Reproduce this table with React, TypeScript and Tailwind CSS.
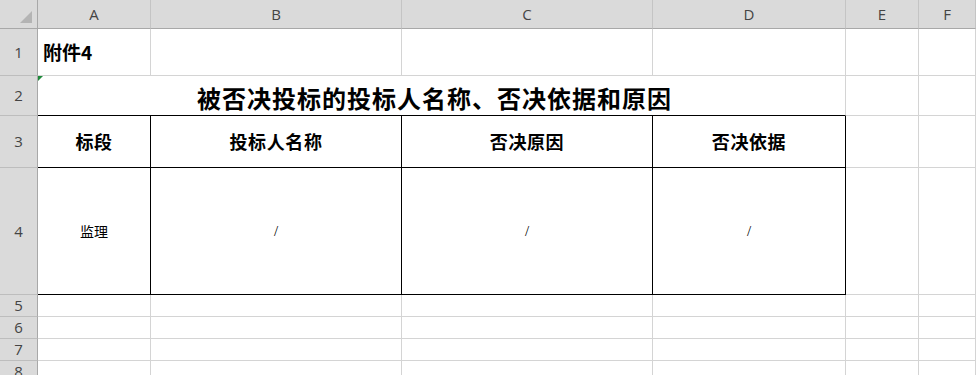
import React from "react";

const COLS = [
  { key: "A", w: "w-[113px]" },
  { key: "B", w: "w-[251px]" },
  { key: "C", w: "w-[251px]" },
  { key: "D", w: "w-[193px]" },
  { key: "E", w: "w-[73px]" },
  { key: "F", w: "flex-1" },
];

const cjk = "font-['Noto_Sans_CJK_SC',sans-serif]";
const ui = "font-['Open_Sans','Noto_Sans',sans-serif]";

function RowHead({ n, h }: { n: number; h: string }) {
  return (
    <div
      className={`${h} w-[38px] shrink-0 flex items-center justify-center bg-[#dadada] border-r border-b border-r-[#a8a8a8] border-b-[#bdbdbd] text-[15px] text-[#444] ${ui}`}
    >
      {n}
    </div>
  );
}

function Cell({
  w,
  className = "",
  children,
}: {
  w: string;
  className?: string;
  children?: React.ReactNode;
}) {
  return (
    <div className={`${w} shrink-0 border-r border-b border-[#d4d4d4] flex items-center justify-center ${className}`}>
      {children}
    </div>
  );
}

function EmptyRow({ n, h }: { n: number; h: string }) {
  return (
    <div className={`flex ${h}`}>
      <RowHead n={n} h={h} />
      {COLS.map((c) => (
        <Cell key={c.key} w={c.w} />
      ))}
    </div>
  );
}

export default function App() {
  const heads = ["标段", "投标人名称", "否决原因", "否决依据"];
  return (
    <div className="w-[976px] h-[375px] overflow-hidden bg-white flex flex-col">
      {/* column header */}
      <div className="flex h-[29px] shrink-0">
        <div className="w-[38px] shrink-0 bg-[#dadada] border-r border-b border-[#a8a8a8] flex items-end justify-end pr-[5px] pb-[5px]">
          <svg width="12" height="12" viewBox="0 0 12 12">
            <polygon points="12,0 12,12 0,12" fill="#b4b4b4" />
          </svg>
        </div>
        {COLS.map((c) => (
          <div
            key={c.key}
            className={`${c.w} shrink-0 bg-[#dadada] border-r border-b border-r-[#c4c4c4] border-b-[#a8a8a8] flex items-center justify-center text-[15px] text-[#444] ${ui}`}
          >
            {c.key}
          </div>
        ))}
      </div>

      {/* row 1 */}
      <div className="flex h-[47px] shrink-0">
        <RowHead n={1} h="h-[47px]" />
        <Cell w={COLS[0].w} className="!justify-start pl-[5px]">
          <span className={`text-[19px] font-bold text-black ${cjk}`}>附件4</span>
        </Cell>
        {COLS.slice(1).map((c) => (
          <Cell key={c.key} w={c.w} />
        ))}
      </div>

      {/* row 2 : merged title */}
      <div className="flex h-[40px] shrink-0">
        <RowHead n={2} h="h-[40px]" />
        <div className="relative w-[808px] shrink-0 border-r border-b border-r-[#d4d4d4] border-b-black flex items-center justify-center pt-[4px] pr-[14px]">
          <span className="absolute left-0 top-0 w-0 h-0 border-t-[5px] border-r-[5px] border-t-[#1e8a3a] border-r-transparent" />
          <span className={`text-[24px] font-bold text-black tracking-[1px] ${cjk}`}>
            被否决投标的投标人名称、否决依据和原因
          </span>
        </div>
        {COLS.slice(4).map((c) => (
          <Cell key={c.key} w={c.w} />
        ))}
      </div>

      {/* row 3 : table head */}
      <div className="flex h-[52px] shrink-0">
        <RowHead n={3} h="h-[52px]" />
        {heads.map((t, i) => (
          <Cell key={t} w={COLS[i].w} className="!border-black">
            <span className={`text-[18px] font-bold text-black tracking-[0.6px] ${cjk}`}>{t}</span>
          </Cell>
        ))}
        {COLS.slice(4).map((c) => (
          <Cell key={c.key} w={c.w} />
        ))}
      </div>

      {/* row 4 : data */}
      <div className="flex h-[127px] shrink-0">
        <RowHead n={4} h="h-[127px]" />
        <Cell w={COLS[0].w} className="!border-black">
          <span className={`text-[14px] text-black ${cjk}`}>监理</span>
        </Cell>
        {[1, 2, 3].map((i) => (
          <Cell key={i} w={COLS[i].w} className="!border-black">
            <span className="text-[15px] text-black font-['Liberation_Serif',serif]">/</span>
          </Cell>
        ))}
        {COLS.slice(4).map((c) => (
          <Cell key={c.key} w={c.w} />
        ))}
      </div>

      <EmptyRow n={5} h="h-[22px]" />
      <EmptyRow n={6} h="h-[22px]" />
      <EmptyRow n={7} h="h-[22px]" />
      <EmptyRow n={8} h="h-[22px]" />
    </div>
  );
}
